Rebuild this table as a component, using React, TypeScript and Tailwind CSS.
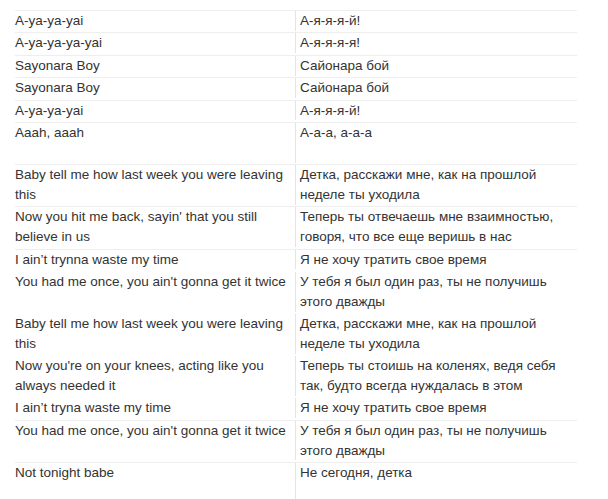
import React from 'react';

type Row = { en: string; ru: string; tall?: boolean; line?: boolean };

const rows: Row[] = [
  { en: 'A-ya-ya-yai', ru: 'А-я-я-я-й!' },
  { en: 'A-ya-ya-ya-yai', ru: 'А-я-я-я-я!' },
  { en: 'Sayonara Boy', ru: 'Сайонара бой' },
  { en: 'Sayonara Boy', ru: 'Сайонара бой' },
  { en: 'A-ya-ya-yai', ru: 'А-я-я-я-й!' },
  { en: 'Aaah, aaah', ru: 'А-а-а, а-а-а', tall: true },
  { en: 'Baby tell me how last week you were leaving this', ru: 'Детка, расскажи мне, как на прошлой неделе ты уходила' },
  { en: "Now you hit me back, sayin' that you still believe in us", ru: 'Теперь ты отвечаешь мне взаимностью, говоря, что все еще веришь в нас' },
  { en: 'I ain’t trynna waste my time', ru: 'Я не хочу тратить свое время' },
  { en: "You had me once, you ain't gonna get it twice", ru: 'У тебя я был один раз, ты не получишь этого дважды', line: false },
  { en: 'Baby tell me how last week you were leaving this', ru: 'Детка, расскажи мне, как на прошлой неделе ты уходила', line: false },
  { en: "Now you're on your knees, acting like you always needed it", ru: 'Теперь ты стоишь на коленях, ведя себя так, будто всегда нуждалась в этом', line: false },
  { en: 'I ain’t tryna waste my time', ru: 'Я не хочу тратить свое время', line: false },
  { en: "You had me once, you ain't gonna get it twice", ru: 'У тебя я был один раз, ты не получишь этого дважды' },
  { en: 'Not tonight babe', ru: 'Не сегодня, детка', tall: true },
];

export default function App() {
  return (
    <div className="min-h-screen bg-white pt-[10px] pl-[15px] font-['Liberation_Sans',Arial,sans-serif] text-[13.5px] leading-[19.8px] text-[#333]">
      <table className="w-[562px] table-fixed border-separate border-spacing-0">
        <colgroup>
          <col className="w-[280px]" />
          <col />
        </colgroup>
        <tbody>
          {rows.map((r, i) => {
            const border = r.line === false ? 'border-t border-transparent' : 'border-t border-[#eeeeee]';
            return (
              <tr key={i}>
                <td className={`${border} p-0 pb-[1.6px] align-top`}>
                  {r.en}
                  {r.tall && (
                    <>
                      <br />
                      &nbsp;
                    </>
                  )}
                </td>
                <td className={`${border} p-0 pb-[1.6px] align-top`}>
                  <div className="border-l border-[#e4e4e4] pl-[4px]">
                    {r.ru}
                    {r.tall && (
                      <>
                        <br />
                        &nbsp;
                      </>
                    )}
                  </div>
                </td>
              </tr>
            );
          })}
        </tbody>
      </table>
    </div>
  );
}
